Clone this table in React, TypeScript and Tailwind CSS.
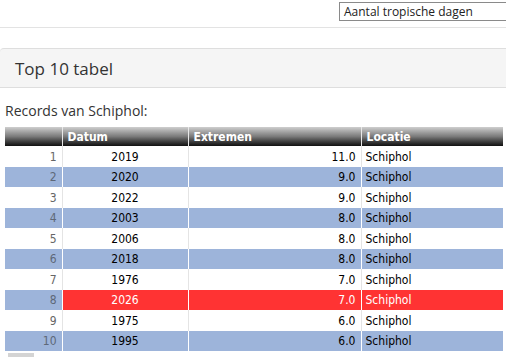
import React from "react";

interface Row {
  nr: number;
  jaar: string;
  waarde: string;
  locatie: string;
  actief?: boolean;
}

const rows: Row[] = [
  { nr: 1, jaar: "2019", waarde: "11.0", locatie: "Schiphol" },
  { nr: 2, jaar: "2020", waarde: "9.0", locatie: "Schiphol" },
  { nr: 3, jaar: "2022", waarde: "9.0", locatie: "Schiphol" },
  { nr: 4, jaar: "2003", waarde: "8.0", locatie: "Schiphol" },
  { nr: 5, jaar: "2006", waarde: "8.0", locatie: "Schiphol" },
  { nr: 6, jaar: "2018", waarde: "8.0", locatie: "Schiphol" },
  { nr: 7, jaar: "1976", waarde: "7.0", locatie: "Schiphol" },
  { nr: 8, jaar: "2026", waarde: "7.0", locatie: "Schiphol", actief: true },
  { nr: 9, jaar: "1975", waarde: "6.0", locatie: "Schiphol" },
  { nr: 10, jaar: "1995", waarde: "6.0", locatie: "Schiphol" },
];

export default function App() {
  return (
    <div className="w-[506px] h-[357px] overflow-hidden bg-white font-['Open_Sans',sans-serif] text-[#333]">
      {/* bovenbalk met keuzelijst */}
      <div className="h-[28px] border-b border-[#e3e3e3] flex items-start justify-end pt-[2px]">
        <div className="w-[175px] h-[19px] border border-[#8a8a8a] pl-[4px] text-[12px] leading-[17px] text-[#222] -mr-[8px]">
          Aantal tropische dagen
        </div>
      </div>

      {/* paneel kop */}
      <div className="mt-[20px] h-[40px] bg-[#f5f5f5] border-y border-[#dedede] rounded-tl-[4px] flex items-center pl-[15px]">
        <h2 className="text-[17px] text-[#333] leading-none">Top 10 tabel</h2>
      </div>

      <p className="mt-[14px] pl-[5px] text-[14px] leading-[18px] text-[#333]">Records van Schiphol:</p>

      <div className="px-[5px] mt-[7px] font-['DejaVu_Sans_Condensed','Liberation_Sans',sans-serif] text-[12px]">
        <table className="w-[498px] border-collapse table-fixed">
          <colgroup>
            <col className="w-[57px]" />
            <col className="w-[126px]" />
            <col className="w-[173px]" />
            <col className="w-[142px]" />
          </colgroup>
          <thead>
            <tr className="h-[19px] bg-gradient-to-b from-[#cfcfcf] via-[#7a7a7a] to-[#111] text-white text-left">
              <th className="border-r border-[#e8e8e8]"></th>
              <th className="border-r border-[#e8e8e8] pl-[5px] font-bold">Datum</th>
              <th className="border-r border-[#e8e8e8] pl-[5px] font-bold">Extremen</th>
              <th className="pl-[5px] font-bold">Locatie</th>
            </tr>
          </thead>
          <tbody>
            {rows.map((r) => {
              const blauw = r.nr % 2 === 0;
              const cel = r.actief
                ? "bg-[#ff3333] text-white border-white"
                : blauw
                ? "bg-[#9db4da] text-black border-white"
                : "bg-white text-black border-[#e4e4e4]";
              return (
                <tr key={r.nr} className={blauw ? "h-[20px]" : "h-[21px]"}>
                  <td
                    className={`text-right pr-[5px] border-r ${
                      blauw ? "bg-[#9db4da] text-[#5e6878] border-white" : "bg-white text-[#666] border-[#e4e4e4]"
                    }`}
                  >
                    {r.nr}
                  </td>
                  <td className={`text-center border-r ${cel}`}>{r.jaar}</td>
                  <td className={`text-right pr-[5px] border-r ${cel}`}>{r.waarde}</td>
                  <td className={`pl-[4px] ${cel}`}>{r.locatie}</td>
                </tr>
              );
            })}
          </tbody>
        </table>
      </div>

      <div className="ml-[8px] mt-[2px] w-[26px] h-[6px] bg-[#d4d4d4]"></div>
    </div>
  );
}
